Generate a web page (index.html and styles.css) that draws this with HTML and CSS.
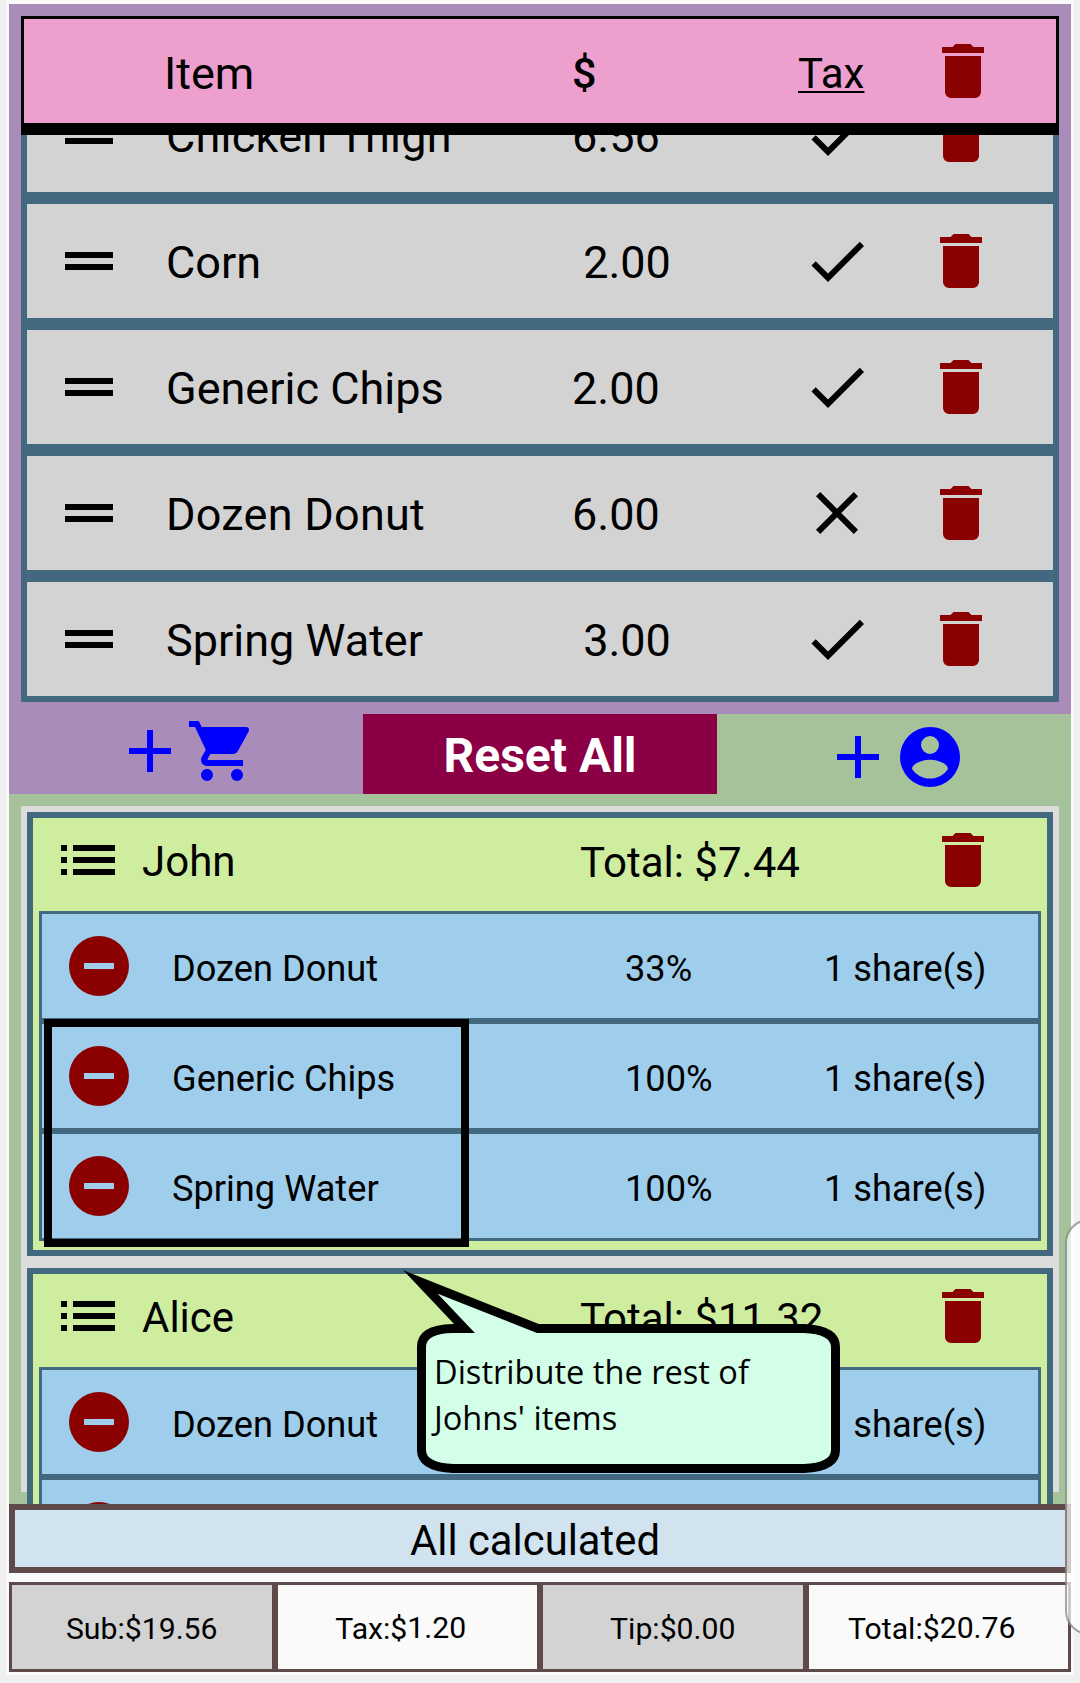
FILE: index.html
```
<!DOCTYPE html>
<html lang="en">
<head>
<meta charset="utf-8">
<title>Bill split</title>
<link rel="stylesheet" href="styles.css">
</head>
<body>
<svg width="0" height="0" class="sprite" aria-hidden="true">
  <symbol id="trash" viewBox="0 0 24 24"><path d="M19,4H15.5L14.5,3H9.5L8.5,4H5V6H19M6,19A2,2 0 0,0 8,21H16A2,2 0 0,0 18,19V7H6V19Z"/></symbol>
  <symbol id="drag" viewBox="0 0 24 24"><path d="M4 9H20V11H4zM4 13H20V15H4z"/></symbol>
  <symbol id="check" viewBox="0 0 24 24"><path d="M21,7L9,19L3.5,13.5L4.91,12.09L9,16.17L19.59,5.59L21,7Z"/></symbol>
  <symbol id="cross" viewBox="0 0 24 24"><path d="M19,6.41L17.59,5L12,10.59L6.41,5L5,6.41L10.59,12L5,17.59L6.41,19L12,13.41L17.59,19L19,17.59L13.41,12L19,6.41Z"/></symbol>
  <symbol id="list" viewBox="0 0 24 24"><path d="M3 7h2v2H3zM7 7h14v2H7zM3 11h2v2H3zM7 11h14v2H7zM3 15h2v2H3zM7 15h14v2H7z"/></symbol>
  <symbol id="minus" viewBox="0 0 24 24"><path d="M17,13H7V11H17M12,2A10,10 0 0,0 2,12A10,10 0 0,0 12,22A10,10 0 0,0 22,12A10,10 0 0,0 12,2Z"/></symbol>
  <symbol id="plus" viewBox="0 0 24 24"><path d="M19,13H13V19H11V13H5V11H11V5H13V11H19V13Z"/></symbol>
  <symbol id="cart" viewBox="0 0 24 24"><path d="M17,18C15.89,18 15,18.89 15,20A2,2 0 0,0 17,22A2,2 0 0,0 19,20C19,18.89 18.1,18 17,18M1,2V4H3L6.6,11.59L5.24,14.04C5.09,14.32 5,14.65 5,15A2,2 0 0,0 7,17H19V15H7.42A0.25,0.25 0 0,1 7.17,14.75C7.17,14.68 7.19,14.62 7.22,14.56L8.1,13H15.55C16.3,13 16.96,12.58 17.3,11.97L20.88,5.5C20.95,5.34 21,5.17 21,5A1,1 0 0,0 20,4H5.21L4.27,2M7,18C5.89,18 5,18.89 5,20A2,2 0 0,0 7,22A2,2 0 0,0 9,20C9,18.89 8.1,18 7,18Z"/></symbol>
  <symbol id="account" viewBox="0 0 24 24"><path d="M12,19.2C9.5,19.2 7.29,17.92 6,16C6.03,14 10,12.9 12,12.9C14,12.9 17.97,14 18,16C16.71,17.92 14.5,19.2 12,19.2M12,5A3,3 0 0,1 15,8A3,3 0 0,1 12,11A3,3 0 0,1 9,8A3,3 0 0,1 12,5M12,2A10,10 0 0,0 2,12A10,10 0 0,0 12,22A10,10 0 0,0 22,12C22,6.47 17.5,2 12,2Z"/></symbol>
</svg>

<div class="screen">
  <section class="items">
    <header class="items-head">
      <span class="label">Item</span>
      <span class="label price">$</span>
      <span class="label tax">Tax</span>
      <svg class="icon red"><use href="#trash"/></svg>
    </header>
    <div class="item-list">
      <div class="item"><svg class="icon"><use href="#drag"/></svg><span class="wide">Chicken Thigh</span><span>6.56</span><svg class="icon"><use href="#check"/></svg><svg class="icon red"><use href="#trash"/></svg></div>
      <div class="item"><svg class="icon"><use href="#drag"/></svg><span>Corn</span><span> 2.00</span><svg class="icon"><use href="#check"/></svg><svg class="icon red"><use href="#trash"/></svg></div>
      <div class="item"><svg class="icon"><use href="#drag"/></svg><span>Generic Chips</span><span>2.00</span><svg class="icon"><use href="#check"/></svg><svg class="icon red"><use href="#trash"/></svg></div>
      <div class="item"><svg class="icon"><use href="#drag"/></svg><span class="wide">Dozen Donut</span><span>6.00</span><svg class="icon"><use href="#cross"/></svg><svg class="icon red"><use href="#trash"/></svg></div>
      <div class="item"><svg class="icon"><use href="#drag"/></svg><span>Spring Water</span><span> 3.00</span><svg class="icon"><use href="#check"/></svg><svg class="icon red"><use href="#trash"/></svg></div>
    </div>
  </section>

  <div class="actions">
    <div class="add add-item"><svg class="icon"><use href="#plus"/></svg><svg class="icon"><use href="#cart"/></svg></div>
    <div class="reset">Reset All</div>
    <div class="add add-person"><svg class="icon"><use href="#plus"/></svg><svg class="icon"><use href="#account"/></svg></div>
  </div>

  <section class="people">
    <div class="panel">
      <article class="person">
        <header class="person-head"><svg class="icon"><use href="#list"/></svg><span class="name">John</span><span class="total">Total: $7.44</span><svg class="icon red"><use href="#trash"/></svg></header>
        <div class="shares">
          <div class="share"><svg class="icon red"><use href="#minus"/></svg><span>Dozen Donut</span><span>33%</span><span>1 share(s)</span></div>
          <div class="share"><svg class="icon red"><use href="#minus"/></svg><span>Generic Chips</span><span>100%</span><span>1 share(s)</span></div>
          <div class="share"><svg class="icon red"><use href="#minus"/></svg><span>Spring Water</span><span>100%</span><span>1 share(s)</span></div>
        </div>
      </article>
      <article class="person">
        <header class="person-head"><svg class="icon"><use href="#list"/></svg><span class="name">Alice</span><span class="total">Total: $11.32</span><svg class="icon red"><use href="#trash"/></svg></header>
        <div class="shares">
          <div class="share"><svg class="icon red"><use href="#minus"/></svg><span>Dozen Donut</span><span></span><span>1 share(s)</span></div>
          <div class="share"><svg class="icon red"><use href="#minus"/></svg></div>
        </div>
      </article>
    </div>
  </section>

  <div class="status">All calculated</div>

  <footer class="sums">
    <div class="sum">Sub:$19.56</div>
    <div class="sum light">Tax:$<span class="amount">1.20</span></div>
    <div class="sum">Tip:$0.00</div>
    <div class="sum light">Total:$<span class="amount">20.76</span></div>
  </footer>
</div>

<div class="highlight"></div>
<div class="callout">
  <svg class="bubble" viewBox="0 0 450 220"><path d="M64.500,73.500 L20.500,27 L137.800,73.500 H404 Q435.500,75 435.500,92 V195 Q435.500,212 404,213.500 H53 Q21.500,212 21.500,195 V92 Q21.500,74 53,73.500 Z"/></svg>
  <p class="tip">Distribute the rest of<br>Johns' items</p>
</div>
<div class="edge-handle"></div>
</body>
</html>
```
FILE: styles.css
```
* { box-sizing: border-box; }

body {
  margin: 0;
  position: relative;
  width: 1080px;
  height: 1683px;
  overflow: hidden;
  background: #f0f0f0;
  color: #000;
  font-family: Roboto, "Liberation Sans", sans-serif;
}

.sprite { position: absolute; }

.icon { display: block; width: 72px; height: 72px; fill: #000; }
.red { fill: #8b0000; }

.screen {
  width: 1068px;
  height: 1675px;
  margin: 0 6px;
  padding: 4px 3px 3px;
  background: #fafafa;
  display: flex;
  flex-direction: column;
}

/* Item table */
.items { height: 710px; padding: 12px; background: #a98cba; }

.items-head {
  height: 119px;
  border: 3px solid #000;
  border-bottom-width: 12px;
  padding-left: 140px;
  background: #ed9fce;
  display: grid;
  grid-template-columns: 408px 226px 129px 1fr;
  align-items: center;
  font-size: 45px;
}
.label { padding-top: 5px; }
.price { font-size: 43px; font-weight: 500; padding-top: 4px; }
.tax {
  padding-top: 5px;
  font-size: 42px;
  text-decoration: underline;
  text-decoration-thickness: 2px;
  text-underline-offset: 3px;
  text-decoration-skip-ink: none;
}

.item-list {
  height: 567px;
  border: 6px solid #426980;
  border-top: 0;
  background: #426980;
  display: flex;
  flex-direction: column;
  justify-content: flex-end;
  gap: 12px;
  overflow: hidden;
}
.item {
  flex: none;
  height: 114px;
  padding-left: 26px;
  background: #d3d3d3;
  display: grid;
  grid-template-columns: 113px 406px 229px 124px 1fr;
  align-items: center;
  font-size: 45px;
}
.item span { padding-top: 3px; white-space: pre; }
.wide { letter-spacing: 0.25px; }

/* Action bar */
.actions { height: 80px; display: grid; grid-template-columns: repeat(3, 1fr); }
.add { display: flex; justify-content: center; }
.add .icon { fill: #00f; }
.add-item { background: #a98cba; padding-top: 1px; }
.add-person { background: #a6c29a; padding-top: 7px; }
.reset {
  background: #8b0045;
  color: #fff;
  font-size: 48px;
  font-weight: 700;
  line-height: 76px;
  padding-top: 4px;
  text-align: center;
}

/* People */
.people { height: 710px; padding: 12px; background: #a6c29a; overflow: hidden; }
.panel {
  height: 686px;
  padding: 6px;
  background: #dcdcdc;
  display: flex;
  flex-direction: column;
  gap: 12px;
}
.person { flex: none; border: 6px solid #426980; background: #ceed9f; padding: 0 6px 9px; }
.person-head {
  height: 93px;
  padding: 0 0 9px 13px;
  display: grid;
  grid-template-columns: 90px 438px 347px 1fr;
  align-items: center;
  font-size: 42px;
}
.name { padding-top: 3px; }
.total { padding-top: 5px; }
.share {
  height: 110px;
  padding-left: 21px;
  border: 3px solid #426980;
  background: #9fceed;
  display: grid;
  grid-template-columns: 109px 453px 199px 1fr;
  align-items: center;
  font-size: 36.2px;
}
.share span { padding-top: 5px; }

/* Status and sums */
.status {
  height: 69px;
  border: 6px solid #5e4a4a;
  background: #d0e3ee;
  padding: 2px 10px 0 0;
  text-align: center;
  font-size: 41.8px;
  line-height: 57px;
}
.sums { height: 90px; margin-top: 9px; display: grid; grid-template-columns: repeat(4, 1fr); }
.sum {
  border: 3px solid #5e4a4a;
  background: #d3d3d3;
  padding-top: 3px;
  text-align: center;
  font-size: 30.2px;
  line-height: 81px;
}
.light { background: #fafafa; padding-right: 13px; }
.amount { position: relative; top: -1px; }

/* Annotations over the page */
.highlight {
  position: absolute;
  left: 44px;
  top: 1019px;
  width: 425px;
  height: 228px;
  border: 8px solid #000;
}
.callout { position: absolute; left: 400px; top: 1255px; width: 450px; height: 220px; }
.bubble { display: block; width: 450px; height: 220px; fill: #d3ffe9; stroke: #000; stroke-width: 9px; stroke-miterlimit: 10; }
.tip {
  position: absolute;
  left: 34px;
  top: 94px;
  margin: 0;
  font: 32.6px/46px "Open Sans", "Noto Sans", sans-serif;
  white-space: nowrap;
}
.edge-handle {
  position: absolute;
  left: 1065px;
  top: 1219px;
  width: 60px;
  height: 416px;
  border: 2px solid rgba(0, 0, 0, 0.35);
  border-radius: 24px;
  background: rgba(255, 255, 255, 0.7);
}
```
